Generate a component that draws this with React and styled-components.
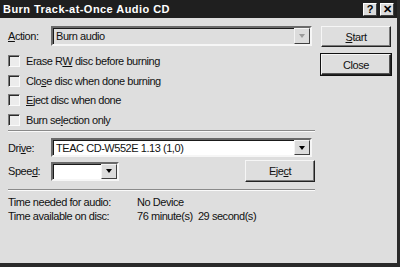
import React from "react";
import styled, { createGlobalStyle } from "styled-components";

const GlobalStyle = createGlobalStyle`
  html, body {
    margin: 0;
    padding: 0;
    background: #dedede;
  }
`;

const Window = styled.div`
  width: 400px;
  height: 267px;
  box-sizing: border-box;
  background: #dedede;
  border-right: 3px solid #2a2a2a;
  border-bottom: 4px solid #2a2a2a;
  font-family: "Liberation Sans", Arial, sans-serif;
  font-size: 11px;
  letter-spacing: -0.45px;
  color: #111;
  display: flex;
  flex-direction: column;
  overflow: hidden;
`;

const TitleBar = styled.div`
  height: 18px;
  flex-shrink: 0;
  background: #1f1f1f;
  display: flex;
  align-items: center;
  justify-content: space-between;
  padding: 0 3px 0 3px;
`;

const Title = styled.span`
  color: #fff;
  font-weight: bold;
  font-size: 11px;
  letter-spacing: 0.45px;
`;

const TitleButtons = styled.div`
  display: flex;
  gap: 3px;
`;

const TitleButton = styled.div`
  width: 14px;
  height: 13px;
  box-sizing: border-box;
  background: #dcdcdc;
  border: 1px solid;
  border-color: #fff #404040 #404040 #fff;
  display: flex;
  align-items: center;
  justify-content: center;
  font-weight: bold;
  font-size: 11px;
  letter-spacing: 0;
  color: #000;
  line-height: 1;
`;

const Body = styled.div`
  padding: 8px 0 0 8px;
  display: flex;
  flex-direction: column;
`;

const Top = styled.div`
  display: flex;
  gap: 8px;
`;

const LeftCol = styled.div`
  width: 305px;
  display: flex;
  flex-direction: column;
`;

const RightCol = styled.div`
  display: flex;
  flex-direction: column;
  gap: 7px;
`;

const FieldRow = styled.div`
  display: flex;
  align-items: center;
  height: ${(p) => p.h || 20}px;
  margin-bottom: ${(p) => p.mb || 0}px;
`;

const Label = styled.span`
  width: 43px;
  flex-shrink: 0;
`;

const Combo = styled.div`
  width: ${(p) => p.w}px;
  height: ${(p) => p.h || 20}px;
  box-sizing: border-box;
  border: 2px solid;
  border-color: #6a6a6a #f6f6f6 #f6f6f6 #6a6a6a;
  box-shadow: inset 1px 1px 0 #1a1a1a;
  background: ${(p) => (p.disabled ? "#dedede" : "#fff")};
  color: #111;
  display: flex;
  align-items: center;
  justify-content: space-between;
  padding-left: 3px;
`;

const ComboArrow = styled.div`
  width: 16px;
  height: 100%;
  box-sizing: border-box;
  background: #dcdcdc;
  border: 1px solid;
  border-color: #f4f4f4 #404040 #404040 #f4f4f4;
  display: flex;
  align-items: center;
  justify-content: center;
  &::after {
    content: "";
    border-left: 3.5px solid transparent;
    border-right: 3.5px solid transparent;
    border-top: 4px solid ${(p) => (p.disabled ? "#9a9a9a" : "#000")};
  }
`;

const Button = styled.div`
  width: ${(p) => p.w || 70}px;
  height: ${(p) => p.h || 21}px;
  box-sizing: border-box;
  background: #dedede;
  border: 1px solid;
  border-color: #f6f6f6 #222 #222 #f6f6f6;
  box-shadow: inset -1px -1px 0 #7a7a7a;
  outline: ${(p) => (p.$default ? "1px solid #111" : "none")};
  display: flex;
  align-items: center;
  justify-content: center;
  ${(p) => p.$default && "box-shadow: inset -1px -1px 0 #555, 1px 1px 0 #111;"}
`;

const Checks = styled.div`
  display: flex;
  flex-direction: column;
  gap: 7px;
  margin-top: 9px;
`;

const CheckRow = styled.label`
  display: flex;
  align-items: center;
  gap: 6px;
  height: 12.5px;
`;

const Box = styled.span`
  width: 12px;
  height: 12px;
  box-sizing: border-box;
  border: 1px solid;
  border-color: #7a7a7a #fafafa #fafafa #7a7a7a;
  box-shadow: inset 1px 1px 0 #2a2a2a;
  background: #ececec;
  flex-shrink: 0;
`;

const Separator = styled.div`
  width: 307px;
  height: 0;
  border-top: 1px solid #8a8a8a;
  border-bottom: 1px solid #fafafa;
  margin: ${(p) => p.m};
`;

const SpeedRow = styled.div`
  display: flex;
  align-items: center;
  justify-content: space-between;
  width: 307px;
  height: 22px;
`;

const SpeedField = styled.div`
  display: flex;
  align-items: center;
`;

const Info = styled.div`
  display: grid;
  grid-template-columns: 129px auto;
  row-gap: 2px;
`;

const U = styled.span`
  text-decoration: underline;
`;

export default function App() {
  return (
    <>
      <GlobalStyle />
      <Window>
        <TitleBar>
          <Title>Burn Track-at-Once Audio CD</Title>
          <TitleButtons>
            <TitleButton>?</TitleButton>
            <TitleButton>✕</TitleButton>
          </TitleButtons>
        </TitleBar>
        <Body>
          <Top>
            <LeftCol>
              <FieldRow>
                <Label>
                  <U>A</U>ction:
                </Label>
                <Combo w={261} disabled>
                  <span>Burn audio</span>
                  <ComboArrow disabled />
                </Combo>
              </FieldRow>
              <Checks>
                <CheckRow>
                  <Box />
                  <span>
                    Erase R<U>W</U> disc before burning
                  </span>
                </CheckRow>
                <CheckRow>
                  <Box />
                  <span>
                    Clo<U>s</U>e disc when done burning
                  </span>
                </CheckRow>
                <CheckRow>
                  <Box />
                  <span>
                    <U>E</U>ject disc when done
                  </span>
                </CheckRow>
                <CheckRow>
                  <Box />
                  <span>
                    Burn se<U>l</U>ection only
                  </span>
                </CheckRow>
              </Checks>
            </LeftCol>
            <RightCol>
              <Button>
                <span>
                  <U>S</U>tart
                </span>
              </Button>
              <Button $default>Close</Button>
            </RightCol>
          </Top>
          <Separator m="4px 0 6px 0" />
          <FieldRow h={19} mb={3}>
            <Label>
              Dri<U>v</U>e:
            </Label>
            <Combo w={261} h={19}>
              <span>TEAC CD-W552E 1.13 (1,0)</span>
              <ComboArrow />
            </Combo>
          </FieldRow>
          <SpeedRow>
            <SpeedField>
              <Label>
                Spee<U>d</U>:
              </Label>
              <Combo w={68} h={19}>
                <span />
                <ComboArrow />
              </Combo>
            </SpeedField>
            <Button w={70} h={22}>
              <span>
                Eje<U>c</U>t
              </span>
            </Button>
          </SpeedRow>
          <Separator m="7px 0 5px 0" />
          <Info>
            <span>Time needed for audio:</span>
            <span>No Device</span>
            <span>Time available on disc:</span>
            <span>76 minute(s)&nbsp;&nbsp;29 second(s)</span>
          </Info>
        </Body>
      </Window>
    </>
  );
}
